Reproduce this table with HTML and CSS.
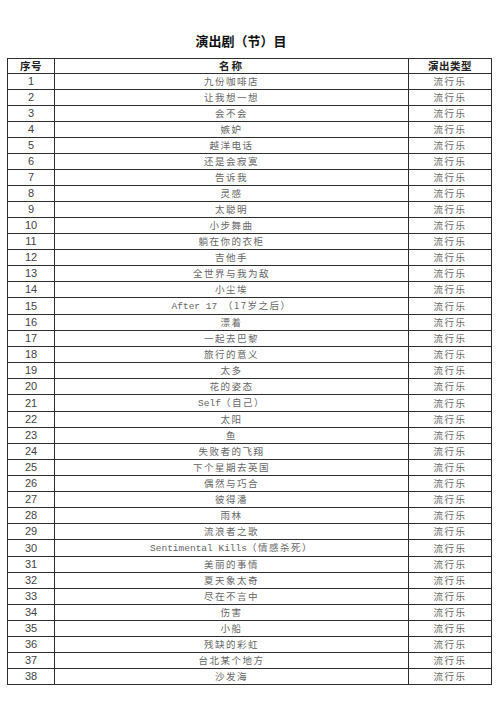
FILE: index.html
```html
<!DOCTYPE html>
<html lang="zh">
<head>
<meta charset="utf-8">
<title>演出剧（节）目</title>
<link rel="stylesheet" href="styles.css">
</head>
<body>
<div class="page">
  <h1 class="title">演出剧（节）目</h1>
  <table class="list">
    <colgroup><col class="c-no"><col class="c-name"><col class="c-type"></colgroup>
    <thead>
      <tr><th>序号</th><th class="th-name">名称</th><th>演出类型</th></tr>
    </thead>
    <tbody>
      <tr><td class="no">1</td><td class="name">九份咖啡店</td><td class="type">流行乐</td></tr>
      <tr><td class="no">2</td><td class="name">让我想一想</td><td class="type">流行乐</td></tr>
      <tr><td class="no">3</td><td class="name">会不会</td><td class="type">流行乐</td></tr>
      <tr><td class="no">4</td><td class="name">嫉妒</td><td class="type">流行乐</td></tr>
      <tr><td class="no">5</td><td class="name">越洋电话</td><td class="type">流行乐</td></tr>
      <tr><td class="no">6</td><td class="name">还是会寂寞</td><td class="type">流行乐</td></tr>
      <tr><td class="no">7</td><td class="name">告诉我</td><td class="type">流行乐</td></tr>
      <tr><td class="no">8</td><td class="name">灵感</td><td class="type">流行乐</td></tr>
      <tr><td class="no">9</td><td class="name">太聪明</td><td class="type">流行乐</td></tr>
      <tr><td class="no">10</td><td class="name">小步舞曲</td><td class="type">流行乐</td></tr>
      <tr><td class="no">11</td><td class="name">躺在你的衣柜</td><td class="type">流行乐</td></tr>
      <tr><td class="no">12</td><td class="name">吉他手</td><td class="type">流行乐</td></tr>
      <tr><td class="no">13</td><td class="name">全世界与我为敌</td><td class="type">流行乐</td></tr>
      <tr><td class="no">14</td><td class="name">小尘埃</td><td class="type">流行乐</td></tr>
      <tr><td class="no">15</td><td class="name"><span class="lat">After 17 </span>（17岁之后）</td><td class="type">流行乐</td></tr>
      <tr><td class="no">16</td><td class="name">漂着</td><td class="type">流行乐</td></tr>
      <tr><td class="no">17</td><td class="name">一起去巴黎</td><td class="type">流行乐</td></tr>
      <tr><td class="no">18</td><td class="name">旅行的意义</td><td class="type">流行乐</td></tr>
      <tr><td class="no">19</td><td class="name">太多</td><td class="type">流行乐</td></tr>
      <tr><td class="no">20</td><td class="name">花的姿态</td><td class="type">流行乐</td></tr>
      <tr><td class="no">21</td><td class="name"><span class="lat">Self</span>（自己）</td><td class="type">流行乐</td></tr>
      <tr><td class="no">22</td><td class="name">太阳</td><td class="type">流行乐</td></tr>
      <tr><td class="no">23</td><td class="name">鱼</td><td class="type">流行乐</td></tr>
      <tr><td class="no">24</td><td class="name">失败者的飞翔</td><td class="type">流行乐</td></tr>
      <tr><td class="no">25</td><td class="name">下个星期去英国</td><td class="type">流行乐</td></tr>
      <tr><td class="no">26</td><td class="name">偶然与巧合</td><td class="type">流行乐</td></tr>
      <tr><td class="no">27</td><td class="name">彼得潘</td><td class="type">流行乐</td></tr>
      <tr><td class="no">28</td><td class="name">雨林</td><td class="type">流行乐</td></tr>
      <tr><td class="no">29</td><td class="name">流浪者之歌</td><td class="type">流行乐</td></tr>
      <tr><td class="no">30</td><td class="name"><span class="lat">Sentimental Kills</span>（情感杀死）</td><td class="type">流行乐</td></tr>
      <tr><td class="no">31</td><td class="name">美丽的事情</td><td class="type">流行乐</td></tr>
      <tr><td class="no">32</td><td class="name">夏天象太奇</td><td class="type">流行乐</td></tr>
      <tr><td class="no">33</td><td class="name">尽在不言中</td><td class="type">流行乐</td></tr>
      <tr><td class="no">34</td><td class="name">伤害</td><td class="type">流行乐</td></tr>
      <tr><td class="no">35</td><td class="name">小船</td><td class="type">流行乐</td></tr>
      <tr><td class="no">36</td><td class="name">残缺的彩虹</td><td class="type">流行乐</td></tr>
      <tr><td class="no">37</td><td class="name">台北某个地方</td><td class="type">流行乐</td></tr>
      <tr><td class="no">38</td><td class="name">沙发海</td><td class="type">流行乐</td></tr>
    </tbody>
  </table>
</div>
</body>
</html>
```

FILE: styles.css
```css
html, body {
  margin: 0;
  padding: 0;
  background: #ffffff;
}

.page {
  padding: 33px 9px 0 7px;
  font-family: "Noto Sans CJK SC", sans-serif;
}

.title {
  margin: 0 0 10px 0;
  padding-right: 16px;
  text-align: center;
  font-size: 13px;
  line-height: 15px;
  font-weight: 700;
  color: #111;
}

.list {
  width: 485px;
  border-collapse: collapse;
  table-layout: fixed;
}

.c-no { width: 47px; }
.c-type { width: 83px; }

.list th,
.list td {
  border: 1px solid #2e2e2e;
  padding: 0;
  height: 15px;
  line-height: 15px;
  text-align: center;
  white-space: nowrap;
  overflow: hidden;
}

.list th {
  height: 14px;
  line-height: 14px;
  font-size: 10.5px;
  font-weight: 700;
  color: #222;
  letter-spacing: 0.5px;
}

.list .th-name {
  letter-spacing: 2px;
}

.no {
  font-family: "Liberation Sans", "Noto Sans CJK SC", sans-serif;
  font-size: 11px;
  color: #444;
}

.name,
.type {
  font-family: "Noto Sans CJK SC", sans-serif;
  font-size: 9.5px;
  letter-spacing: 1.5px;
  color: #666;
}

.lat {
  font-family: "Liberation Mono", monospace;
  letter-spacing: 0;
}
```
